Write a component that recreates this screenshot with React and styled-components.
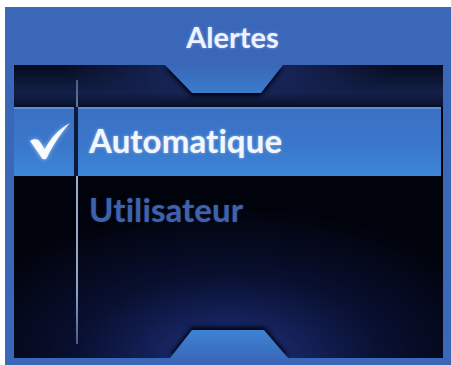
import React from 'react';
import styled, { createGlobalStyle } from 'styled-components';

const GlobalStyle = createGlobalStyle`
  html, body {
    margin: 0;
    padding: 0;
    background: #ffffff;
  }
`;

const Frame = styled.div`
  box-sizing: border-box;
  margin: 7px 0 0 5px;
  width: 446px;
  height: 358px;
  background: #3a67b8;
  padding: 0 8px 7px 9px;
  display: flex;
  flex-direction: column;
  font-family: Lato, "Open Sans", sans-serif;
`;

const Title = styled.div`
  height: 58px;
  display: flex;
  align-items: center;
  justify-content: center;
  padding-left: 8px;
  font-weight: 700;
  font-size: 29px;
  color: #eef3ff;
  text-shadow: 0 0 3px rgba(200, 220, 255, 0.5);
`;

const Panel = styled.div`
  position: relative;
  flex: 1;
  overflow: hidden;
  padding-top: 42px;
  background:
    radial-gradient(ellipse 170px 36px at 50% 0%, rgba(40, 60, 140, 0.75), rgba(0, 0, 0, 0) 100%),
    linear-gradient(to bottom, #050a1c 0px, #14204a 28px, #0a1330 40px, rgba(0, 0, 0, 0) 44px),
    radial-gradient(ellipse 280px 150px at 50% 100%, rgba(42, 66, 168, 0.75), rgba(16, 28, 84, 0.5) 55%, rgba(0, 0, 0, 0) 100%),
    #01030c;
`;

const Notch = styled.div`
  position: absolute;
  left: ${p => p.$left}px;
  width: 118px;
  height: 28px;
  ${p => (p.$bottom ? 'bottom: 0;' : 'top: 0;')}
  filter: drop-shadow(0 ${p => (p.$bottom ? '-3px' : '3px')} 2px rgba(0, 0, 10, 0.95));
  z-index: 3;

  &::before {
    content: '';
    position: absolute;
    inset: 0;
    background: ${p =>
      p.$bottom
        ? 'linear-gradient(to bottom, #3d82d4, #3a6bbb)'
        : 'linear-gradient(to bottom, #3a67b8, #3b7ccd)'};
    clip-path: ${p =>
      p.$bottom
        ? 'polygon(22px 0, 94px 0, 118px 100%, 0 100%)'
        : 'polygon(0 0, 118px 0, 96px 100%, 27px 100%)'};
  }
`;

const Divider = styled.div`
  position: absolute;
  left: 62px;
  top: 15px;
  bottom: 14px;
  width: 2px;
  background: linear-gradient(to bottom, #4a5b85, #9fb0d0 30%, #8ea2c8 80%, #4a5b85);
  z-index: 1;
`;

const List = styled.div`
  position: relative;
  z-index: 2;
  display: flex;
  flex-direction: column;
  margin-right: 2px;
`;

const Row = styled.div`
  display: grid;
  grid-template-columns: 60px 1fr;
  column-gap: 4px;
  height: 69px;
  background: ${p => (p.$selected ? '#0c1a3c' : 'transparent')};
`;

const Cell = styled.div`
  display: flex;
  align-items: center;
  padding-left: ${p => (p.$check ? '15px' : '11px')};
  background: ${p =>
    p.$selected
      ? 'linear-gradient(to bottom, #3a70c4 0%, #3a78cc 60%, #3d86d8 100%)'
      : 'transparent'};
  box-shadow: ${p => (p.$selected ? 'inset 0 2px 0 #5a8fd6' : 'none')};
`;

const Label = styled.span`
  font-weight: 700;
  font-size: 33px;
  letter-spacing: 0.1px;
  color: ${p => (p.$selected ? '#f2f6ff' : '#3f62ad')};
  text-shadow: ${p =>
    p.$selected ? '0 0 3px rgba(220, 235, 255, 0.6)' : '0 0 2px rgba(60, 100, 180, 0.4)'};
  margin-top: -3px;
`;

const CheckMark = () => (
  <svg width="42" height="38" viewBox="0 0 40 36" style={{ filter: 'drop-shadow(0 0 2px rgba(230,240,255,0.6))' }}>
    <path
      d="M1 17 C4 15 8 15 10 17 L15 25 C21 14 28 6 39 0 C31 9 24 19 17 33 C16 35 13 35 12 33 Z"
      fill="#f8fbff"
    />
  </svg>
);

const items = [
  { label: 'Automatique', selected: true },
  { label: 'Utilisateur', selected: false },
];

export default function App() {
  return (
    <>
      <GlobalStyle />
      <Frame>
        <Title>Alertes</Title>
        <Panel>
          <Notch $left={151} />
          <Divider />
          <List>
            {items.map(item => (
              <Row key={item.label} $selected={item.selected}>
                <Cell $check $selected={item.selected}>
                  {item.selected && <CheckMark />}
                </Cell>
                <Cell $selected={item.selected}>
                  <Label $selected={item.selected}>{item.label}</Label>
                </Cell>
              </Row>
            ))}
          </List>
          <Notch $bottom $left={156} />
        </Panel>
      </Frame>
    </>
  );
}
